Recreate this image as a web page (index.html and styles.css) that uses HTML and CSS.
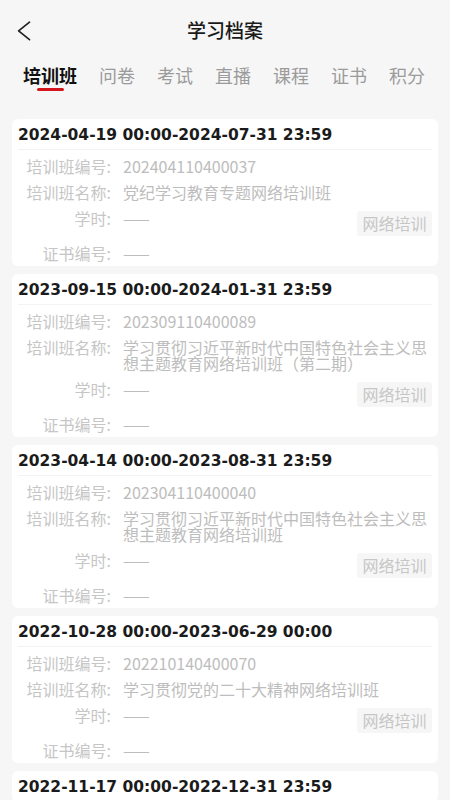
FILE: index.html
```html
<!DOCTYPE html>
<html lang="zh-CN">
<head>
<meta charset="utf-8">
<title>学习档案</title>
<link rel="stylesheet" href="styles.css">
</head>
<body>
<header class="nav">
  <svg class="back" width="14" height="20" viewBox="0 0 14 20"><path d="M12.5 1.2 L1.6 9.8 L12.5 18.6" fill="none" stroke="#222" stroke-width="1.7" stroke-linecap="round" stroke-linejoin="round"/></svg>
  <h1 class="nav-title">学习档案</h1>
</header>
<nav class="tabs">
  <div class="tab active"><span>培训班</span><i class="bar"></i></div>
  <div class="tab"><span>问卷</span></div>
  <div class="tab"><span>考试</span></div>
  <div class="tab"><span>直播</span></div>
  <div class="tab"><span>课程</span></div>
  <div class="tab"><span>证书</span></div>
  <div class="tab"><span>积分</span></div>
</nav>
<main class="list">
  <section class="card">
    <div class="card-title">2024-04-19 00:00-2024-07-31 23:59</div>
    <div class="rows">
      <div class="row"><span class="label">培训班编号:</span><span class="value">202404110400037</span></div>
      <div class="row"><span class="label">培训班名称:</span><span class="value">党纪学习教育专题网络培训班</span></div>
      <div class="row"><span class="label">学时:</span><span class="value">——</span><span class="tag">网络培训</span></div>
      <div class="row"><span class="label">证书编号:</span><span class="value">——</span></div>
    </div>
  </section>
  <section class="card">
    <div class="card-title">2023-09-15 00:00-2024-01-31 23:59</div>
    <div class="rows">
      <div class="row"><span class="label">培训班编号:</span><span class="value">202309110400089</span></div>
      <div class="row"><span class="label">培训班名称:</span><span class="value">学习贯彻习近平新时代中国特色社会主义思想主题教育网络培训班（第二期）</span></div>
      <div class="row"><span class="label">学时:</span><span class="value">——</span><span class="tag">网络培训</span></div>
      <div class="row"><span class="label">证书编号:</span><span class="value">——</span></div>
    </div>
  </section>
  <section class="card">
    <div class="card-title">2023-04-14 00:00-2023-08-31 23:59</div>
    <div class="rows">
      <div class="row"><span class="label">培训班编号:</span><span class="value">202304110400040</span></div>
      <div class="row"><span class="label">培训班名称:</span><span class="value">学习贯彻习近平新时代中国特色社会主义思想主题教育网络培训班</span></div>
      <div class="row"><span class="label">学时:</span><span class="value">——</span><span class="tag">网络培训</span></div>
      <div class="row"><span class="label">证书编号:</span><span class="value">——</span></div>
    </div>
  </section>
  <section class="card">
    <div class="card-title">2022-10-28 00:00-2023-06-29 00:00</div>
    <div class="rows">
      <div class="row"><span class="label">培训班编号:</span><span class="value">202210140400070</span></div>
      <div class="row"><span class="label">培训班名称:</span><span class="value">学习贯彻党的二十大精神网络培训班</span></div>
      <div class="row"><span class="label">学时:</span><span class="value">——</span><span class="tag">网络培训</span></div>
      <div class="row"><span class="label">证书编号:</span><span class="value">——</span></div>
    </div>
  </section>
  <section class="card">
    <div class="card-title">2022-11-17 00:00-2022-12-31 23:59</div>
  </section>
</main>
</body>
</html>
```

FILE: styles.css
```css
* { box-sizing: border-box; }
html, body {
  margin: 0;
  padding: 0;
  background: #f6f6f6;
  font-family: "Noto Sans CJK SC", "Noto Sans", sans-serif;
  width: 450px;
  height: 800px;
  overflow: hidden;
}
.nav {
  height: 60px;
  display: flex;
  align-items: center;
  justify-content: center;
  position: relative;
}
.back {
  position: absolute;
  left: 17px;
  top: 21px;
}
.nav-title {
  margin: 0;
  font-size: 19px;
  font-weight: 500;
  color: #1a1a1a;
  line-height: 60px;
}
.tabs {
  display: flex;
  gap: 22px;
  padding: 3px 0 0 23px;
  height: 31px;
}
.tab {
  display: flex;
  flex-direction: column;
  align-items: center;
}
.tab span {
  font-size: 18px;
  line-height: 24px;
  color: #9b9b9b;
}
.tab.active span {
  color: #111;
  font-weight: 700;
}
.bar {
  display: block;
  width: 27px;
  height: 3px;
  margin-top: 1px;
  border-radius: 2px;
  background: #d4161c;
}
.list {
  display: flex;
  flex-direction: column;
  gap: 8px;
  padding: 28px 12px 0;
}
.card {
  background: #fff;
  border-radius: 6px;
  padding: 0 6px;
}
.card-title {
  font-family: "DejaVu Sans", sans-serif;
  font-weight: 700;
  font-size: 15.5px;
  line-height: 16px;
  color: #1b1b1b;
  padding: 8px 0 6px;
  border-bottom: 1px solid #f3f3f3;
}
.rows {
  padding-top: 3px;
}
.row {
  display: flex;
  align-items: flex-start;
  font-size: 16px;
  line-height: 16px;
}
.label {
  flex: 0 0 93px;
  text-align: right;
  color: #c6c6c6;
  padding: 5px 0;
  white-space: nowrap;
}
.value {
  margin-left: 12px;
  color: #bdbdbd;
  padding: 5px 0;
  flex: 1 1 auto;
  min-width: 0;
}
.tag {
  flex: 0 0 auto;
  margin: 6px 0 4px auto;
  height: 25px;
  line-height: 25px;
  padding: 0 5.5px;
  background: #f6f6f6;
  color: #c6c6c6;
  border-radius: 3px;
  font-size: 16px;
}
```
